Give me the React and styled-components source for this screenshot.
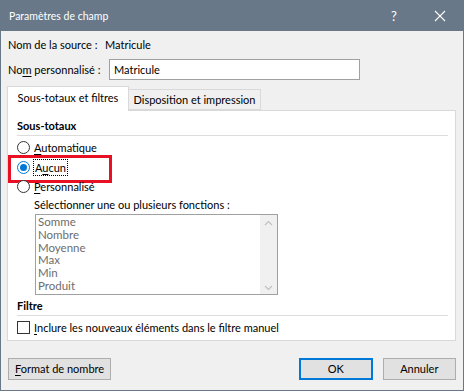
import React from "react";
import styled, { createGlobalStyle } from "styled-components";

const Global = createGlobalStyle`
	html, body {
		margin: 0;
		padding: 0;
		background: #f0f0f0;
	}
	body {
		font-family: Lato, "Noto Sans", sans-serif;
		font-size: 11px;
		line-height: 14px;
		color: #000;
		white-space: nowrap;
	}
`;

const Window = styled.div`
	width: 464px;
	height: 391px;
	box-sizing: border-box;
	border: 1px solid #687888;
	border-top: none;
	background: #f0f0f0;
	display: flex;
	flex-direction: column;
	overflow: hidden;
`;

const TitleBar = styled.div`
	height: 31px;
	flex: none;
	background: #687888;
	color: #fff;
	display: flex;
	align-items: center;
	padding-left: 8px;
	font-size: 10.5px;
`;

const Title = styled.div`
	flex: 1;
`;

const TitleButton = styled.div`
	width: 46px;
	height: 31px;
	display: flex;
	align-items: center;
	justify-content: center;
	font-size: 13px;
`;

const Body = styled.div`
	flex: 1;
	display: flex;
	flex-direction: column;
	padding: 0 7px 0 6px;
`;

const Row = styled.div`
	display: flex;
	align-items: center;
	height: ${(p) => p.h}px;
	margin-top: ${(p) => p.mt || 0}px;
`;

const Label = styled.span`
	width: ${(p) => p.w}px;
	flex: none;
	padding-left: 1px;
`;

const Input = styled.div`
	width: 251px;
	height: 21px;
	box-sizing: border-box;
	border: 1px solid #a0a0a0;
	background: #fff;
	display: flex;
	align-items: center;
	padding-left: 4px;
`;

const Tabs = styled.div`
	display: flex;
	align-items: flex-end;
	height: 25px;
	margin-top: 6px;
	position: relative;
	z-index: 1;
`;

const Tab = styled.div`
	box-sizing: border-box;
	width: ${(p) => p.w}px;
	height: ${(p) => (p.active ? 25 : 21)}px;
	padding-bottom: ${(p) => (p.active ? 2 : 0)}px;
	background: ${(p) => (p.active ? "#fff" : "#f0f0f0")};
	border: 1px solid #d9d9d9;
	border-bottom: ${(p) => (p.active ? "none" : "1px solid #d9d9d9")};
	border-left: ${(p) => (p.first ? "1px solid #d9d9d9" : "none")};
	display: flex;
	align-items: center;
	justify-content: center;
	margin-bottom: ${(p) => (p.active ? 0 : 1)}px;
`;

const Panel = styled.div`
	height: 231px;
	box-sizing: border-box;
	margin-top: -1px;
	background: #fff;
	border: 1px solid #d9d9d9;
	padding: 6px 7px 0 9px;
	display: flex;
	flex-direction: column;
	position: relative;
`;

const SectionTitle = styled.div`
	font-weight: bold;
	height: 17px;
	display: flex;
	align-items: center;
	border-bottom: 1px solid #dcdcdc;
	padding-bottom: 1px;
	margin-top: ${(p) => p.mt || 0}px;
`;

const Option = styled.div`
	display: flex;
	align-items: center;
	height: 19px;
	margin-top: ${(p) => p.mt || 0}px;
	position: relative;
`;

const Radio = styled.span`
	width: 13px;
	height: 13px;
	box-sizing: border-box;
	border-radius: 50%;
	border: 1px solid #333;
	background: #fff;
	margin-right: 4px;
	display: flex;
	align-items: center;
	justify-content: center;
	flex: none;
	border-color: ${(p) => (p.checked ? "#0078d7" : "#333")};
	&::after {
		content: "";
		display: ${(p) => (p.checked ? "block" : "none")};
		width: 7px;
		height: 7px;
		border-radius: 50%;
		background: #0078d7;
	}
`;

const Check = styled.span`
	width: 13px;
	height: 13px;
	box-sizing: border-box;
	border: 1px solid #333;
	background: #fff;
	margin-right: 4px;
	flex: none;
`;

const Focus = styled.span`
	outline: 1px dotted #000;
	padding: 0 1px;
	line-height: 15px;
`;

const Highlight = styled.div`
	position: absolute;
	left: -9px;
	top: -3px;
	width: 104px;
	height: 28px;
	box-sizing: border-box;
	border: 3px solid #e81123;
	pointer-events: none;
`;

const SubLabel = styled.div`
	padding-left: 17px;
	height: 16px;
	display: flex;
	align-items: center;
	margin-top: 1px;
`;

const List = styled.div`
	margin-left: 18px;
	margin-top: 1px;
	width: 243px;
	height: 81px;
	flex: none;
	box-sizing: border-box;
	border: 1px solid #a0a0a0;
	display: flex;
	overflow: hidden;
`;

const Items = styled.div`
	flex: 1;
	padding: 1px 0 0 2px;
	color: #6d6d6d;
`;

const Item = styled.div`
	height: 12.8px;
	line-height: 12.8px;
	font-size: 11.5px;
`;

const ScrollBar = styled.div`
	width: 17px;
	background: #f0f0f0;
	display: flex;
	flex-direction: column;
	justify-content: space-between;
	align-items: center;
	padding: 5px 0 3px;
`;

const U = styled.span`
	text-decoration: underline;
	text-underline-offset: 2px;
`;

const Footer = styled.div`
	display: flex;
	align-items: center;
	margin-top: 17px;
	padding-left: 1px;
	gap: 10px;
`;

const Button = styled.div`
	width: ${(p) => p.w}px;
	height: 22px;
	box-sizing: border-box;
	border: ${(p) => (p.primary ? "2px solid #0078d7" : "1px solid #adadad")};
	background: #e1e1e1;
	display: flex;
	align-items: center;
	justify-content: center;
	margin-left: ${(p) => p.ml || 0}px;
`;

const Chevron = ({ up }) => (
	<svg width="9" height="6" viewBox="0 0 9 6">
		<path
			d={up ? "M1 5 L4.5 1.5 L8 5" : "M1 1 L4.5 4.5 L8 1"}
			fill="none"
			stroke="#c0c0c0"
			strokeWidth="1.2"
		/>
	</svg>
);

const functions = ["Somme", "Nombre", "Moyenne", "Max", "Min", "Produit"];

export default function App() {
	return (
		<>
			<Global />
			<Window>
				<TitleBar>
					<Title>Paramètres de champ</Title>
					<TitleButton>?</TitleButton>
					<TitleButton>
						<svg width="12" height="12" viewBox="0 0 12 12">
							<path d="M1 1 L11 11 M11 1 L1 11" stroke="#fff" strokeWidth="1.1" />
						</svg>
					</TitleButton>
				</TitleBar>
				<Body>
					<Row h={17} mt={5}>
						<Label w={97}>Nom de la source :</Label>
						<span>Matricule</span>
					</Row>
					<Row h={21} mt={6}>
						<Label w={101}>
							No<U>m</U> personnalisé :
						</Label>
						<Input>Matricule</Input>
					</Row>
					<Tabs>
						<Tab active first w={122}>Sous-totaux et filtres</Tab>
						<Tab w={132}>Disposition et impression</Tab>
					</Tabs>
					<Panel>
						<SectionTitle>Sous-totaux</SectionTitle>
						<Option mt={2}>
							<Radio />
							<span>
								<U>A</U>utomatique
							</span>
						</Option>
						<Option mt={1}>
							<Highlight />
							<Radio checked />
							<Focus>
								A<U>u</U>cun
							</Focus>
						</Option>
						<Option>
							<Radio />
							<span>
								<U>P</U>ersonnalisé
							</span>
						</Option>
						<SubLabel>Sélectionner une ou plusieurs fonctions :</SubLabel>
						<List>
							<Items>
								{functions.map((f) => (
									<Item key={f}>{f}</Item>
								))}
							</Items>
							<ScrollBar>
								<Chevron up />
								<Chevron />
							</ScrollBar>
						</List>
						<SectionTitle mt={2}>Filtre</SectionTitle>
						<Option mt={2}>
							<Check />
							<span>
								<U>I</U>nclure les nouveaux éléments dans le filtre manuel
							</span>
						</Option>
					</Panel>
					<Footer>
						<Button w={104}>
							<span>
								<U>F</U>ormat de nombre
							</span>
						</Button>
						<Button w={74} primary ml={178}>OK</Button>
						<Button w={74}>Annuler</Button>
					</Footer>
				</Body>
			</Window>
		</>
	);
}
